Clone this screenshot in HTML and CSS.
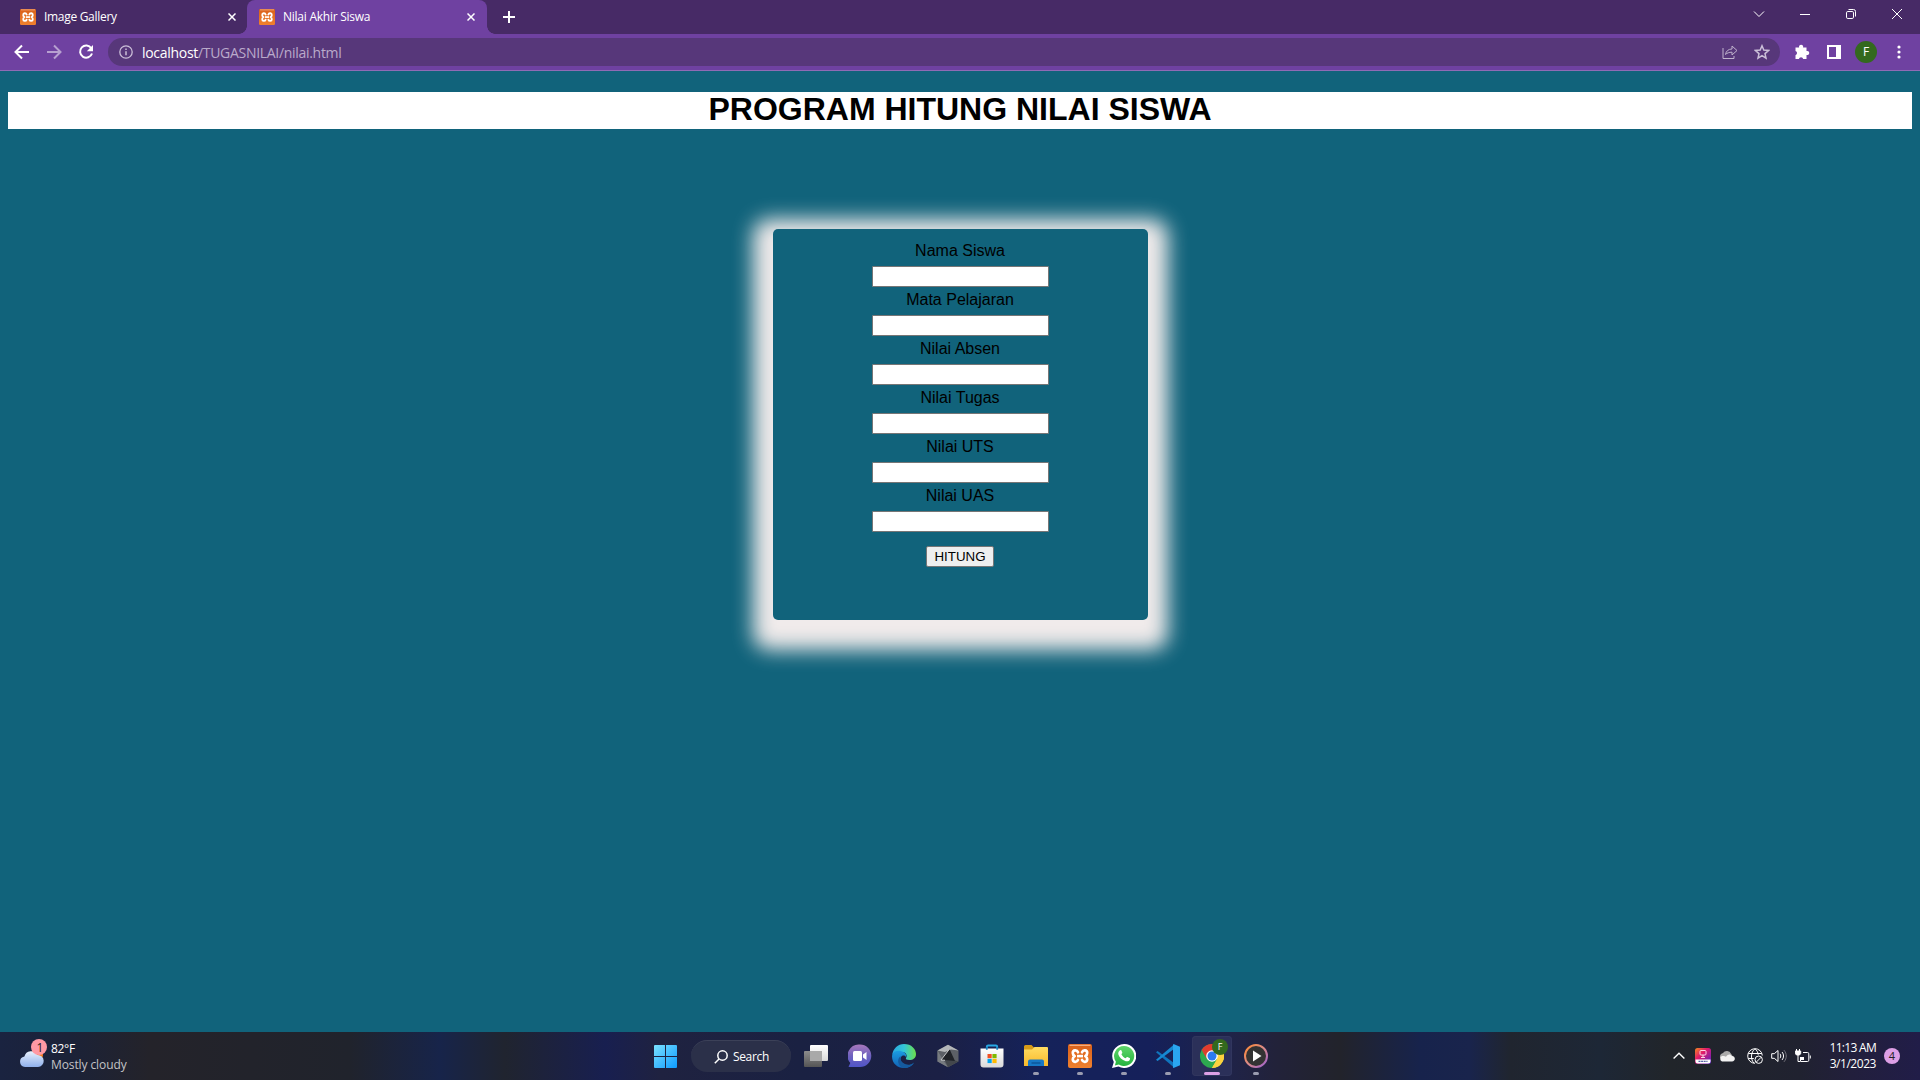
FILE: index.html
```html
<!DOCTYPE html>
<html lang="id">
<head>
<meta charset="utf-8">
<title>Nilai Akhir Siswa</title>
<link rel="stylesheet" href="styles.css">
</head>
<body>
<svg class="defs" width="0" height="0">
  <defs>
    <linearGradient id="orange" x1="0" y1="0" x2="0" y2="1"><stop offset="0" stop-color="#d9601a"/><stop offset="1" stop-color="#f0812e"/></linearGradient>
    <linearGradient id="win" x1="0" y1="0" x2="1" y2="1"><stop offset="0" stop-color="#7be1ff"/><stop offset="1" stop-color="#0d9bff"/></linearGradient>
    <linearGradient id="cloud" x1="0" y1="0" x2="0" y2="1"><stop offset="0" stop-color="#e8f1fd"/><stop offset="1" stop-color="#8fb0ec"/></linearGradient>
    <linearGradient id="white" x1="0" y1="0" x2="0" y2="1"><stop offset="0" stop-color="#fff"/><stop offset="1" stop-color="#d9d9d9"/></linearGradient>
    <linearGradient id="dark" x1="0" y1="0" x2="0" y2="1"><stop offset="0" stop-color="#8c8c8c"/><stop offset="1" stop-color="#555"/></linearGradient>
    <linearGradient id="chat" x1="0" y1="0" x2="0" y2="1"><stop offset="0" stop-color="#a878bd"/><stop offset=".5" stop-color="#6f62bf"/><stop offset="1" stop-color="#4f55c8"/></linearGradient>
    <linearGradient id="edge1" x1="0" y1="0" x2="1" y2="0"><stop offset="0" stop-color="#2aa7e0"/><stop offset=".5" stop-color="#33c5d8"/><stop offset="1" stop-color="#6be04a"/></linearGradient>
    <linearGradient id="edge2" x1="0" y1="0" x2="0" y2="1"><stop offset="0" stop-color="#1b9de2"/><stop offset="1" stop-color="#1261b4"/></linearGradient>
    <linearGradient id="folder" x1="0" y1="0" x2="0" y2="1"><stop offset="0" stop-color="#ffdc62"/><stop offset="1" stop-color="#f9b92b"/></linearGradient>
    <linearGradient id="wa" x1="0" y1="0" x2="0" y2="1"><stop offset="0" stop-color="#60d66a"/><stop offset="1" stop-color="#25b33e"/></linearGradient>
    <linearGradient id="ring" x1="0" y1="0" x2="1" y2="1"><stop offset="0" stop-color="#ff8a30"/><stop offset=".5" stop-color="#d98a8a"/><stop offset="1" stop-color="#9a5fd0"/></linearGradient>
    <linearGradient id="tray" x1="0" y1="0" x2="1" y2="1"><stop offset="0" stop-color="#f58a1f"/><stop offset=".4" stop-color="#e0186c"/><stop offset="1" stop-color="#5126c9"/></linearGradient>
    <symbol id="xampp" viewBox="0 0 24 24">
      <rect width="24" height="24" rx="2" fill="url(#orange)"/>
      <path d="M1.500 1.300h21" stroke="#f7b688" stroke-width="1.200"/>
      <path d="M9 12.100h6" stroke="#fff" stroke-width="2.600"/>
      <path d="M10 8.300C9 5.500 4.800 5.700 4.800 9c0 1.500.8 2.500 1.900 3.100-1.100.6-1.900 1.600-1.900 3.100 0 3.300 4.200 3.500 5.200.7M14 8.300c1-2.800 5.200-2.600 5.200.7 0 1.500-.8 2.500-1.900 3.100 1.100.6 1.900 1.600 1.900 3.100 0 3.300-4.200 3.500-5.200.7" fill="none" stroke="#fff" stroke-width="2.700" stroke-linecap="round" stroke-linejoin="round"/>
    </symbol>
  </defs>
</svg>

<header class="tabstrip">
  <div class="tab">
    <svg class="favicon" width="16" height="16"><use href="#xampp"/></svg>
    <span class="tab-title gallery">Image Gallery</span>
    <svg class="tab-close" width="8" height="8" viewBox="0 0 8 8"><path d="M.5.5l7 7M7.500.5l-7 7"/></svg>
  </div>
  <div class="tab active">
    <svg class="favicon" width="16" height="16"><use href="#xampp"/></svg>
    <span class="tab-title nilai">Nilai Akhir Siswa</span>
    <svg class="tab-close" width="8" height="8" viewBox="0 0 8 8"><path d="M.5.5l7 7M7.500.5l-7 7"/></svg>
  </div>
  <svg class="new-tab" width="12" height="12" viewBox="0 0 12 12"><path d="M6 0v12M0 6h12"/></svg>
  <div class="window-controls">
    <svg width="46" height="28" viewBox="0 0 46 28"><path d="M18 11.500l5 5 5-5"/></svg>
    <svg width="46" height="28" viewBox="0 0 46 28"><path d="M18 14.500h10"/></svg>
    <svg width="46" height="28" viewBox="0 0 46 28"><rect x="18.500" y="11.500" width="7" height="7" rx="1.300"/><path d="M20.500 9.500h5a2 2 0 0 1 2 2v5"/></svg>
    <svg width="46" height="28" viewBox="0 0 46 28"><path d="M18 9l10 10M28 9L18 19"/></svg>
  </div>
</header>

<nav class="toolbar">
  <svg class="nav-icon" width="16" height="16" viewBox="0 0 16 16"><path d="M15 8H2M8 1.500L1.500 8 8 14.500"/></svg>
  <svg class="nav-icon dim" width="16" height="16" viewBox="0 0 16 16"><path d="M1 8h13M8 1.500L14.500 8 8 14.500"/></svg>
  <svg class="nav-icon" width="16" height="16" viewBox="0 0 16 16"><path d="M13.300 4.200A6.100 6.100 0 1 0 14 9.500"/><path class="solid" d="M15 1v6.200H8.800z"/></svg>
  <div class="omnibox">
    <svg width="14" height="14" viewBox="0 0 14 14"><circle cx="7" cy="7" r="6.200" fill="none" stroke="#cbbfd8" stroke-width="1.300"/><path d="M7 6.200v4M7 3.600v1.400" stroke="#cbbfd8" stroke-width="1.500"/></svg>
    <span class="url"><span class="host">localhost</span>/TUGASNILAI/nilai.html</span>
    <svg class="share" width="16" height="16" viewBox="0 0 16 16"><path d="M1 4v10.500h11V12"/><path d="M3.500 10.500C4 7 6.500 5 10 5V2l5 4.500L10 11V8.200c-3 0-5 .8-6.500 2.300z"/></svg>
    <svg class="star" width="16" height="16" viewBox="0 0 16 16"><path d="M8 1.800l1.800 4.300 4.700.4-3.500 3.100 1 4.600-4-2.500-4 2.500 1-4.600L1.500 6.500l4.700-.4z"/></svg>
  </div>
  <svg class="ext" width="16" height="16" viewBox="0 0 16 16"><path d="M1.500 3.500h3.600a2.100 2.100 0 1 1 4 0h3.400V7a2.100 2.100 0 1 1 0 4v4H9.200a2.200 2.200 0 0 0-4.300 0H1.500v-3.800a2.200 2.200 0 0 0 0-4.200z" fill="#fff"/></svg>
  <svg class="panel" width="14" height="14" viewBox="0 0 14 14"><path d="M1 1h12v12H1z" fill="none" stroke="#fff" stroke-width="2"/><path d="M9 1h4v12H9z" fill="#fff"/></svg>
  <span class="avatar">F</span>
  <svg class="menu" width="4" height="14" viewBox="0 0 4 14"><circle cx="2" cy="2" r="1.600"/><circle cx="2" cy="7" r="1.600"/><circle cx="2" cy="12" r="1.600"/></svg>
</nav>

<main class="page">
  <h1>PROGRAM HITUNG NILAI SISWA</h1>
  <form class="card">
    <label>Nama Siswa<input type="text"></label>
    <label>Mata Pelajaran<input type="text"></label>
    <label>Nilai Absen<input type="text"></label>
    <label>Nilai Tugas<input type="text"></label>
    <label>Nilai UTS<input type="text"></label>
    <label>Nilai UAS<input type="text"></label>
    <button type="button">HITUNG</button>
  </form>
</main>

<footer class="taskbar">
  <div class="weather">
    <svg width="28" height="32" viewBox="0 0 28 32">
      <circle cx="18" cy="16" r="6" fill="#f57c1c"/>
      <path d="M6 28a5.300 5.300 0 0 1-.6-10.500 7 7 0 0 1 13-1.500A6 6 0 0 1 19 28z" fill="url(#cloud)"/>
      <circle cx="20" cy="8" r="8" fill="#ff99a4"/>
      <text x="21" y="12.500" text-anchor="middle" font-size="12" fill="#222">1</text>
    </svg>
    <div class="weather-text"><span class="temp">82°F</span><span class="sky">Mostly cloudy</span></div>
  </div>

  <div class="apps">
    <svg class="start" width="23" height="23" viewBox="0 0 23 23"><path d="M1 0h10v11H0V1a1 1 0 0 1 1-1zM12 0h10a1 1 0 0 1 1 1v10H12zM0 12h11v11H1a1 1 0 0 1-1-1zM12 12h11v10a1 1 0 0 1-1 1H12z" fill="url(#win)"/></svg>
    <div class="search">
      <svg width="14" height="14" viewBox="0 0 14 14"><circle cx="8.500" cy="5.500" r="4.700"/><path d="M5 9L.8 13.200"/></svg>
      <span>Search</span>
    </div>
    <div class="app"><svg width="24" height="24" viewBox="0 0 24 24"><rect x="6" y="1" width="18" height="16" rx="1" fill="url(#white)"/><rect y="7" width="18" height="16" rx="1" fill="url(#dark)"/><path d="M6 7h12v10H6z" fill="#a9a9a9"/></svg></div>
    <div class="app"><svg width="24" height="24" viewBox="0 0 24 24"><path d="M12 .5a11.300 11.300 0 1 1 0 22.600H1.200c-.8 0-.8-.8-.2-1.300l1.300-2.700A11.300 11.300 0 0 1 12 .5z" fill="url(#chat)"/><rect x="5" y="7" width="9" height="10" rx="1.500" fill="#fff"/><path d="M15 10.500l3.500-2.500v8L15 13.500z" fill="#fff"/></svg></div>
    <div class="app"><svg width="24" height="24" viewBox="0 0 24 24">
      <path d="M.2 11C1 4.500 6 0 12 0c7.500 0 12 5 12 10 0 4-3 6-6.500 6-3 0-4-1-3.500-2 1.500-2 .5-5.500-3.500-6C6 7.500 1.500 8.500.2 11z" fill="url(#edge1)"/>
      <path d="M.1 11.500C1 7.500 5 6.300 8.500 7c4.300.8 6.500 3.500 5.500 6-.8-2-3.500-2.200-4.800-.3C7 16 10 21 15.500 21c3 0 5-.9 6.700-2.600C20 22 16.200 24 12 24 5 24-.6 18.500.1 11.500z" fill="url(#edge2)"/>
      <path d="M8.500 14c0 4.500 5 7.500 10 6.500 1.500-.3 2.800-1 3.700-2C20 22 16.200 24 12 24c-4-1-7-5-5.500-9 .5-1.300 1.300-2.300 2.500-2.700-.4.600-.5 1.100-.5 1.700z" fill="#155a9e"/></svg></div>
    <div class="app"><svg width="24" height="24" viewBox="0 0 24 24"><path d="M12 .8l10.500 5.700v11L12 23.200 1.500 17.500v-11z" fill="#5c6066"/><path d="M12 .8l10.500 5.700L15 5.500 9 8 1.500 6.500z" fill="#b4b7b9"/><path d="M1.500 6.500L7 16l5 7.200L1.500 17.500z" fill="#777b80"/><path d="M22.500 17.500L12 23.200l-3-6.700h10z" fill="#43474c"/><path d="M13.500 5l5.500 12-14-1z" fill="#202328"/><path d="M13.500 5L5 16l4 .3" fill="none" stroke="#d2d4d5" stroke-width=".9"/></svg></div>
    <div class="app"><svg width="24" height="24" viewBox="0 0 24 24"><path d="M6.800 5.500V2.800c0-1 .4-1.300 1.300-1.300h7.800c.9 0 1.300.3 1.300 1.300v2.700" fill="none" stroke="#28a9e6" stroke-width="1.800"/><path d="M.5 4.500h23v16a3 3 0 0 1-3 3h-17a3 3 0 0 1-3-3z" fill="url(#white)"/><path d="M6.800 3v2.800M17.200 3v2.800" stroke="#1680bd" stroke-width="1.800"/><path d="M7.500 10h4.200v4.200H7.500z" fill="#f25022"/><path d="M12.400 10h4.200v4.200h-4.200z" fill="#7fba00"/><path d="M7.500 14.900h4.200v4.200H7.500z" fill="#00a4ef"/><path d="M12.400 14.900h4.200v4.200h-4.200z" fill="#ffb900"/></svg></div>
    <div class="app running"><svg width="24" height="24" viewBox="0 0 24 24"><path d="M0 2.500A1.500 1.500 0 0 1 1.500 1h6L10 3.500V8H0z" fill="#d79b18"/><path d="M0 5.500h8L10.500 3H23a1 1 0 0 1 1 1v18H0z" fill="url(#folder)"/><path d="M4 22v-4.500a2 2 0 0 1 2-2h12a2 2 0 0 1 2 2V22z" fill="#1778c6"/><path d="M7.500 19h9" stroke="#0b4f91" stroke-width="1.200"/></svg></div>
    <div class="app running"><svg width="24" height="24"><use href="#xampp"/></svg></div>
    <div class="app running"><svg width="24" height="24" viewBox="0 0 24 24"><path d="M12 0a12 12 0 1 1-5.500 22.500L0 24l1.800-6A12 12 0 0 1 12 0z" fill="#fff"/><path d="M12 2a10 10 0 1 1-5.200 18.400l-3.900 1.100 1-3.800A10 10 0 0 1 12 2z" fill="url(#wa)"/><path d="M8.200 6.200c.5-.3 1-.2 1.200.3l.9 2.100c.1.400-.1.800-.9 1.600 1 2 2.400 3.300 4.300 4.100.9-1.100 1.200-1.500 1.700-1.300l2.200 1.100c.6.300.5.800.2 1.600-.6 1.400-2.500 2-4 1.500-4-1.200-6.500-4-7.500-7-.4-1.600.8-3.500 1.900-4z" fill="#fff"/></svg></div>
    <div class="app running"><svg width="24" height="24" viewBox="0 0 24 24"><path d="M0 8.300l1.600-1.400L18 19v4.500z" fill="#0f74bd"/><path d="M0 15.700l1.600 1.400L18 5V.5z" fill="#1689d2"/><path d="M17.500 0L24 2.800v18.400L17.500 24l-.5-.6V.6z" fill="#2aa6f0"/></svg></div>
    <div class="app running focused"><svg width="24" height="24" viewBox="0 0 24 24"><circle cx="12" cy="12" r="12" fill="#2da94f"/><path d="M12 12L1.600 6a12 12 0 0 1 20.800 0z" fill="#e33b2e"/><path d="M12 12l10.400-6A12 12 0 0 1 12 24z" fill="#fdd23f"/><path d="M1.600 6L7 15l5-3z" fill="#e33b2e"/><path d="M12 24l5.200-9L12 12l-5 3z" fill="#2da94f"/><path d="M12 24l5.200-9L22.400 6a12 12 0 0 1-10.400 18z" fill="#fdd23f"/><path d="M12 6.500h10.700L22 5H12z" fill="#e33b2e"/><circle cx="12" cy="12" r="5.800" fill="#fff"/><circle cx="12" cy="12" r="4.500" fill="#2b7bf0"/></svg><span class="profile">F</span></div>
    <div class="app running"><svg width="24" height="24" viewBox="0 0 24 24"><circle cx="12" cy="12" r="11" fill="#333" stroke="url(#ring)" stroke-width="2"/><path d="M9 6.500l8.500 5.500L9 17.500z" fill="#fff"/></svg></div>
  </div>

  <div class="tray">
    <svg width="12" height="8" viewBox="0 0 12 8"><path d="M.6 6.500L6 1.200l5.400 5.300" stroke-width="1.400"/></svg>
    <svg class="recorder" width="16" height="16" viewBox="0 0 16 16"><rect width="16" height="16" rx="2.500" fill="url(#tray)" stroke="none"/><rect x="5" y="2.500" width="6" height="4.500" rx="1" stroke="#ffd5e6"/><path d="M8 7v2.500M6 9.500h4" stroke="#ffd5e6"/><path d="M.5 11.500h15v1.500a2.500 2.500 0 0 1-2.500 2.500H3A2.500 2.500 0 0 1 .5 13z" fill="#fff" stroke="none"/><path d="M3.500 13.300h9" stroke="#2b3d8c" stroke-dasharray="2 .6"/></svg>
    <svg class="onedrive" width="16" height="12" viewBox="0 0 16 12"><path d="M1 8a4.500 4.500 0 0 1 3-5 4.500 4.500 0 0 1 8 .8L15 8z" fill="#aaa" stroke="none"/><path d="M3 11.500a3 3 0 0 1 0-5.500c2-.4 3 .4 4 .7 2-2.800 4.500-2.700 5.800-.6 4 0 4 5.400.2 5.400z" fill="#f2f2f2" stroke="none"/></svg>
    <svg class="globe" width="16" height="16" viewBox="0 0 16 16"><path d="M8 15.300A7.300 7.300 0 1 1 15.300 7.500M7 15C3.500 12 3.500 4 8 .8c2 1.500 3 3.700 3.200 6M1.300 5.500h13.400M1.300 10.500h5.500"/><circle cx="11.700" cy="11.700" r="3.700"/><path d="M9.200 14.200l5-5"/></svg>
    <svg class="speaker" width="16" height="16" viewBox="0 0 16 16"><path d="M.7 5.700h2.600L7 2.500v11l-3.700-3.200H.7zM9 5.800c1 1.300 1 3.100 0 4.400M11 4c2 2.400 2 5.600 0 8"/><path d="M13 2.200c3 3.500 3 8.100 0 11.600" stroke="#77777f"/></svg>
    <svg class="battery" width="16" height="14" viewBox="0 0 16 14"><path d="M1.500 0v2M4.500 0v2M3 6v6.500h2"/><path d="M.3 2h5.400v2.500L4.500 6h-3L.3 4.500z" fill="#fff"/><path d="M8 3.500h4.500a1.300 1.300 0 0 1 1.300 1.300v6.400a1.300 1.300 0 0 1-1.300 1.300H5.500V8M15.300 6.500v3"/><path d="M6 8h3v3H6z" fill="#fff" stroke="none"/></svg>
    <div class="clock"><span class="time">11:13 AM</span><span class="date">3/1/2023</span></div>
    <span class="badge">4</span>
  </div>
</footer>
</body>
</html>
```
FILE: styles.css
```css
* { box-sizing: border-box; }

body {
  margin: 0;
  height: 1080px;
  display: flex;
  flex-direction: column;
  overflow: hidden;
  background: #11637b;
  font-family: "Open Sans", "Noto Sans", sans-serif;
  font-size: 12px;
}

.defs { position: absolute; }
svg { flex: none; display: block; }

/* Tab strip */
.tabstrip { display: flex; height: 34px; background: #472a66; color: #fff; }
.tab { display: flex; align-items: center; width: 247px; padding: 0 11px 0 20px; }
.tab.active {
  position: relative;
  width: 240px;
  padding: 0 12px;
  background: #6f41a1;
  border-radius: 8px 8px 0 0;
}
.tab.active::before,
.tab.active::after {
  content: "";
  position: absolute;
  bottom: 0;
  width: 8px;
  height: 8px;
}
.tab.active::before { left: -8px; background: radial-gradient(circle at 0 0, transparent 7.500px, #6f41a1 8px); }
.tab.active::after { right: -8px; background: radial-gradient(circle at 100% 0, transparent 7.500px, #6f41a1 8px); }
.tab-title { margin-left: 8px; padding-bottom: 1px; white-space: nowrap; }
.gallery { letter-spacing: -.3px; }
.nilai { letter-spacing: -.25px; }
.tab-close { margin-left: auto; fill: none; stroke: #fff; stroke-width: 1.500; }
.new-tab { margin: 11px 0 0 16px; fill: none; stroke: #fff; stroke-width: 2; }
.window-controls { display: flex; margin-left: auto; fill: none; stroke: #fff; }

/* Toolbar */
.toolbar {
  display: flex;
  align-items: center;
  height: 37px;
  padding: 1px 19px 1px 14px;
  background: #6f41a1;
  border-bottom: 1px solid #8f6bb5;
}
.nav-icon { margin-right: 16px; fill: none; stroke: #fff; stroke-width: 2; }
.nav-icon:nth-child(3) { margin-right: 14px; }
.nav-icon .solid { fill: #fff; stroke: none; }
.nav-icon.dim { opacity: .5; }
.omnibox {
  display: flex;
  align-items: center;
  flex: 1;
  height: 28px;
  padding: 0 10px 0 11px;
  margin-right: 14px;
  border-radius: 14px;
  background: #57377a;
}
.url { margin-left: 9px; font-size: 14px; letter-spacing: -.3px; color: #baaacb; }
.host { color: #fff; }
.share { margin-left: auto; fill: none; stroke: #c0b3cd; }
.star { margin-left: 16px; fill: none; stroke: #cbbfd8; stroke-width: 1.500; }
.panel { margin-left: 17px; }
.avatar {
  width: 22px;
  height: 22px;
  margin: 0 20px 0 14px;
  border-radius: 50%;
  background: #33691e;
  color: #fff;
  line-height: 22px;
  text-align: center;
}
.menu { fill: #fff; }

/* Page */
.page {
  flex: 1;
  padding: 21px 8px 0;
  font-family: Arial, "Liberation Sans", sans-serif;
  font-size: 16px;
  color: #000;
}
h1 { margin: 0 0 100px; padding-bottom: 2px; font-size: 32px; line-height: 35px; text-align: center; background: #fff; }
.card {
  display: flex;
  flex-direction: column;
  align-items: center;
  width: 375px;
  height: 391px;
  margin: 0 auto;
  padding-top: 9px;
  border-radius: 5px;
  box-shadow: 0 10px 20px 20px #f0ebeb;
}
.card label { line-height: 25px; text-align: center; }
.card input {
  display: block;
  width: 177px;
  height: 21px;
  margin: 3px auto 0;
  border: 1px solid #767676;
  border-radius: 1px;
  background: #fff;
}
.card button {
  width: 68px;
  height: 21px;
  margin-top: 14px;
  padding: 0;
  border: 1px solid #767676;
  border-radius: 2px;
  background: #efefef;
  font: 13.333px Arial, "Liberation Sans", sans-serif;
  line-height: 19px;
  color: #000;
}

/* Taskbar */
.taskbar {
  display: grid;
  grid-template-columns: 643px auto 1fr;
  height: 48px;
  color: #fff;
  background: linear-gradient(90deg, #1a2340 0, #1b2238 70px, #24232a 150px, #20232c 350px, #17244a 440px, #20242f 505px, #181f50 605px, #1f2240 660px, #1a2142 800px, #1b2045 940px, #15225a 1040px, #15205a 1150px, #1f2348 1230px, #22223a 1275px, #22232b 1340px, #17234c 1420px, #19244c 1470px, #20252f 1510px, #1d2736 1600px, #21252a 1670px, #202230 1800px, #221f3c 1850px, #211d48 1920px);
}
.weather { display: flex; padding: 7px 0 0 19px; }
.weather-text { display: flex; flex-direction: column; margin-left: 4px; line-height: 16px; padding-top: 2px; }
.temp { letter-spacing: -.3px; }
.sky { color: #c3c3c6; letter-spacing: -.1px; }
.apps { display: flex; align-items: center; }
.start { margin: 0 14px 0 11px; }
.search {
  display: flex;
  align-items: center;
  width: 100px;
  height: 32px;
  margin-right: 3px;
  padding-left: 23px;
  border-radius: 16px;
  background: #2b3049;
  border-top: 1px solid #3c4158;
}
.search span { margin-left: 5px; letter-spacing: -.35px; }
.search svg { fill: none; stroke: #fff; stroke-width: 1.500; }
.app { position: relative; display: flex; align-items: center; justify-content: center; width: 44px; height: 40px; }
.running::after {
  content: "";
  position: absolute;
  bottom: 1px;
  left: 19px;
  width: 6px;
  height: 3px;
  border-radius: 2px;
  background: #9a9cb0;
}
.focused { width: 40px; margin: 0 2px; border-radius: 4px; background: #2b3059; box-shadow: inset 0 0 0 1px #31365e; }
.focused::after { left: 12px; width: 16px; background: #dda0e6; }
.profile {
  position: absolute;
  top: 3px;
  left: 20px;
  width: 16px;
  height: 16px;
  border-radius: 50%;
  background: #33691e;
  font-size: 9px;
  line-height: 16px;
  text-align: center;
}
.tray { display: flex; align-items: center; justify-content: flex-end; padding-right: 20px; fill: none; stroke: #fff; }
.recorder { margin-left: 10px; }
.onedrive { margin-left: 8px; }
.globe { margin-left: 12px; }
.speaker, .battery { margin-left: 8px; }
.clock { display: flex; flex-direction: column; align-items: flex-end; width: 65px; line-height: 16px; white-space: nowrap; }
.time { letter-spacing: -.7px; }
.date { letter-spacing: -.45px; }
.badge {
  width: 16px;
  height: 16px;
  margin-left: 8px;
  border-radius: 50%;
  background: #dd9fe6;
  color: #222;
  font-size: 11px;
  line-height: 16px;
  text-align: center;
}
```
